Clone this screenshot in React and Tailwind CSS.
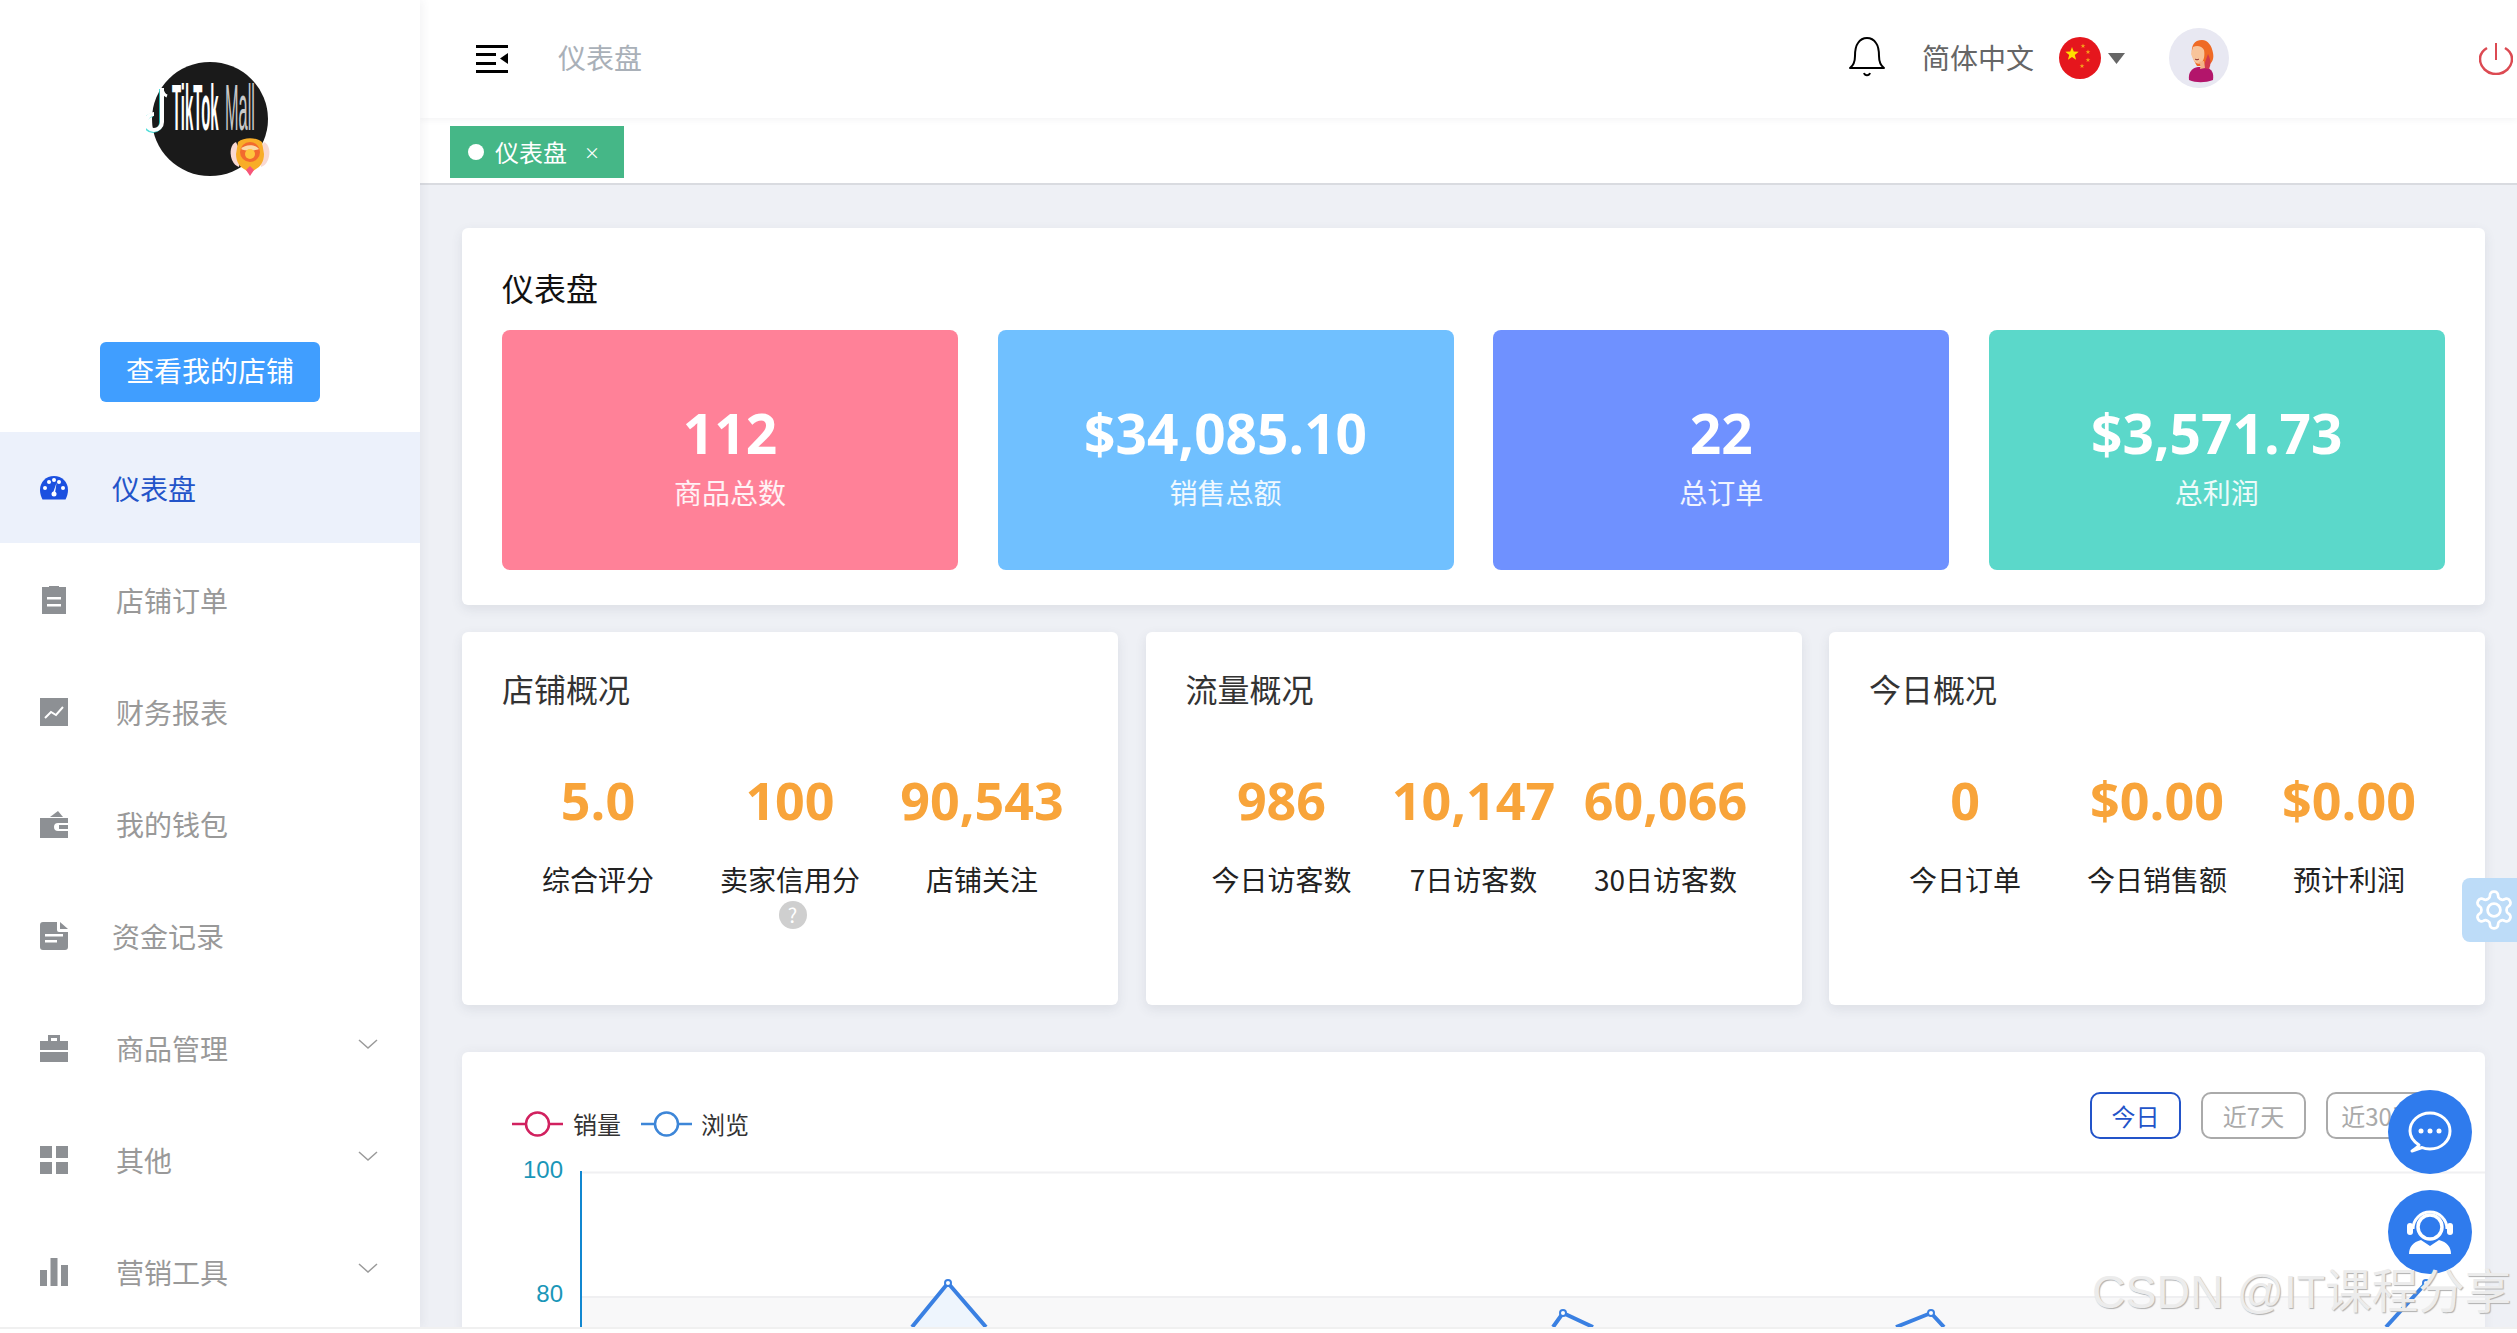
import React from "react";

const menu = [
  { label: "店铺订单", icon: "clipboard" },
  { label: "财务报表", icon: "chart" },
  { label: "我的钱包", icon: "wallet" },
  { label: "资金记录", icon: "file", shift: true },
  { label: "商品管理", icon: "briefcase", arrow: true },
  { label: "其他", icon: "grid", arrow: true },
  { label: "营销工具", icon: "bars", arrow: true },
];

function MenuIcon({ name, color = "#8d9094" }) {
  const c = { width: 28, height: 28, viewBox: "0 0 28 28", fill: color };
  if (name === "gauge")
    return (
      <svg {...c}>
        <path d="M14 2C6 2 0 8 0 16c0 3.500 1 6.500 2.500 9.500h23C27 22.500 28 19.500 28 16 28 8 22 2 14 2z" />
        <circle cx="5" cy="14" r="2" fill="#fff" />
        <circle cx="9" cy="8" r="2" fill="#fff" />
        <circle cx="14" cy="6" r="2" fill="#fff" />
        <circle cx="23" cy="14" r="2" fill="#fff" />
        <circle cx="19" cy="8" r="2" fill="#fff" />
        <path d="M16.500 9l-1.500 10h-2z" fill="#fff" />
        <circle cx="14" cy="20" r="2.500" fill="#fff" />
      </svg>
    );
  if (name === "clipboard")
    return (
      <svg {...c}>
        <path d="M2 2h7V0h10v2h7v28H2z" transform="translate(0 -1)" />
        <rect x="7" y="11" width="14" height="2.500" fill="#fff" />
        <rect x="7" y="18" width="14" height="2.500" fill="#fff" />
      </svg>
    );
  if (name === "chart")
    return (
      <svg {...c}>
        <rect x="0" y="0" width="28" height="28" />
        <path d="M5 20l6-6 5 3 7-8" fill="none" stroke="#fff" strokeWidth="2" />
      </svg>
    );
  if (name === "wallet")
    return (
      <svg {...c}>
        <path d="M10 7l8-6 5 6z" />
        <path d="M0 8h28v5H18a4 4 0 000 8h10v7H0z" />
        <rect x="19" y="15" width="9" height="4" />
      </svg>
    );
  if (name === "file")
    return (
      <svg {...c}>
        <path d="M3 0h14v8a2 2 0 002 2h9v15a3 3 0 01-3 3H3a3 3 0 01-3-3V3a3 3 0 013-3z" />
        <path d="M20 0l8 7h-8z" />
        <rect x="5" y="12" width="18" height="2.500" fill="#fff" />
        <rect x="5" y="18" width="12" height="2.500" fill="#fff" />
      </svg>
    );
  if (name === "briefcase")
    return (
      <svg {...c}>
        <path d="M8 7V1h12v6h-3V4h-6v3z" />
        <rect x="0" y="7" width="28" height="9" />
        <rect x="0" y="18" width="28" height="10" />
      </svg>
    );
  if (name === "grid")
    return (
      <svg {...c}>
        <rect x="0" y="0" width="12" height="12" />
        <rect x="16" y="0" width="12" height="12" />
        <rect x="0" y="16" width="12" height="12" />
        <rect x="16" y="16" width="12" height="12" />
      </svg>
    );
  return (
    <svg {...c}>
      <rect x="0" y="12" width="7" height="16" />
      <rect x="10.500" y="0" width="7" height="28" />
      <rect x="21" y="7" width="7" height="21" />
    </svg>
  );
}

function Logo() {
  return (
    <svg width="130" height="120" viewBox="0 0 130 120" className="block">
      <ellipse cx="64" cy="57" rx="58" ry="57" fill="#1a1a1a" />
      <path d="M16 26v34a8 8 0 11-8-8" fill="none" stroke="#25d6d0" strokeWidth="4" opacity="0.8" transform="translate(-1 1)" />
      <path d="M16 26v34a8 8 0 11-8-8" fill="none" stroke="#fff" strokeWidth="4" />
      <path d="M16 27c1 4 2 6 5 7" fill="none" stroke="#fff" strokeWidth="3" />
      <text transform="translate(26 68) scale(0.62 2.730)" fontFamily="Liberation Sans" fontWeight="700" fontSize="24" fill="#fff">TikTok</text>
      <text transform="translate(79 68) scale(0.68 2.730)" fontFamily="Liberation Sans" fontSize="24" fill="#c9c9c9">Mall</text>
      <g>
        <path d="M90 80c-5 2-7 10-4 18 2 4 4 6 7 7l2-14z" fill="#f9d9d2" />
        <path d="M118 80c5 2 7 10 4 18-2 4-4 6-7 7l-2-14z" fill="#f9d9d2" />
        <path d="M92 80c6-5 18-5 24 0l2 12c0 8-4 13-8 15l-6 4-6-4c-4-2-8-7-8-15z" fill="#f8ad28" />
        <circle cx="104" cy="90" r="10" fill="#f26a2e" />
        <path d="M95 87c4-5 14-5 18 0-4 2-14 2-18 0z" fill="#fbd9a8" />
        <circle cx="104" cy="92" r="5" fill="#ffc53d" />
        <path d="M104 104l4 4-4 6-4-6z" fill="#f6557a" />
      </g>
    </svg>
  );
}

function Flag() {
  const star = (x, y, r, f = "#ffde00") => {
    const p = [];
    for (let i = 0; i < 10; i++) {
      const a = -Math.PI / 2 + (i * Math.PI) / 5;
      const q = i % 2 ? r * 0.42 : r;
      p.push(`${x + q * Math.cos(a)},${y + q * Math.sin(a)}`);
    }
    return <polygon points={p.join(" ")} fill={f} />;
  };
  return (
    <svg width="42" height="42" viewBox="0 0 42 42">
      <circle cx="21" cy="21" r="21" fill="#e5161d" />
      {star(13, 17, 7)}
      {star(24, 9, 2.500, "#f6a01a")}
      {star(29, 15, 2.500, "#f6a01a")}
      {star(29, 23, 2.500, "#f6a01a")}
      {star(23, 29, 2.500, "#f6a01a")}
    </svg>
  );
}

function Avatar() {
  return (
    <svg width="60" height="60" viewBox="0 0 60 60">
      <circle cx="30" cy="30" r="30" fill="#e8e8f2" />
      <path d="M20 52c-1-8 3-12 9-13l8 0c6 2 8 6 7 13-8 3-17 3-24 0z" fill="#b3156b" />
      <path d="M33 12c-8 0-11 6-10 14 1 5 3 9 5 12h11c5-4 6-8 5-13-1-7-5-13-11-13z" fill="#ef6a25" />
      <path d="M39 26c3 6 3 10 1 15l-6-1z" fill="#d23a4c" />
      <path d="M24 19c4-2 9-1 11 3 1 5 0 11-3 13-4 2-7-1-8-4l-2-5z" fill="#f8c49a" />
      <path d="M29 34c2 1 3 4 2 7l5-1-1-7z" fill="#f4b187" />
      <path d="M26 31c1 1 3 1 4 0" fill="none" stroke="#8c2a2a" strokeWidth="1" />
    </svg>
  );
}

function Chart() {
  const blue = "#3a80e2";
  return (
    <svg viewBox="462 1150 2023 177" width="2023" height="177" className="block">
      <rect x="581" y="1297" width="1904" height="30" fill="#f8f8f9" />
      <line x1="581" y1="1172.500" x2="2485" y2="1172.500" stroke="#f0f0f2" strokeWidth="2" />
      <line x1="581" y1="1297" x2="2485" y2="1297" stroke="#efeff1" strokeWidth="2" />
      <line x1="581" y1="1171" x2="581" y2="1327" stroke="#1187d0" strokeWidth="2" />
      <text x="563" y="1178" textAnchor="end" fontFamily="Liberation Sans" fontSize="24" fill="#1a96b8">100</text>
      <text x="563" y="1302" textAnchor="end" fontFamily="Liberation Sans" fontSize="24" fill="#1a96b8">80</text>
      <path d="M912 1327L948 1283L986 1327z" fill="#eef5fd" />
      <path d="M912 1327L948 1283L986 1327" fill="none" stroke={blue} strokeWidth="4" />
      <circle cx="948" cy="1283" r="3" fill="#fff" stroke={blue} strokeWidth="2" />
      <path d="M1553 1327L1563 1313L1593 1327" fill="none" stroke={blue} strokeWidth="4" />
      <circle cx="1563" cy="1313" r="3" fill="#fff" stroke={blue} strokeWidth="2" />
      <path d="M1896 1327L1931 1313L1944 1327" fill="none" stroke={blue} strokeWidth="4" />
      <circle cx="1931" cy="1313" r="3" fill="#fff" stroke={blue} strokeWidth="2" />
      <path d="M2386 1327L2426 1283" fill="none" stroke={blue} strokeWidth="4" />
      <circle cx="2426" cy="1283" r="3" fill="#fff" stroke={blue} strokeWidth="2" />
    </svg>
  );
}

function LegendMark({ color }) {
  return (
    <svg width="51" height="26" viewBox="0 0 51 26">
      <line x1="0" y1="13" x2="51" y2="13" stroke={color} strokeWidth="2.500" />
      <circle cx="25.500" cy="13" r="11.500" fill="#fff" stroke={color} strokeWidth="2.500" />
    </svg>
  );
}

function StatCard({ value, label, bg }) {
  return (
    <div className={`h-[240px] w-[456px] rounded-[8px] ${bg} flex flex-col items-center text-white pt-[68px]`}>
      <div className="text-[55px] leading-[70px] font-bold font-['Open_Sans',sans-serif]">{value}</div>
      <div className="text-[28px] leading-[40px] mt-[4px] text-white/90">{label}</div>
    </div>
  );
}

function Metric({ value, label, help }) {
  return (
    <div className="w-[192px] flex flex-col items-center">
      <div className="h-[64px] text-[52px] leading-[64px] font-bold text-[#f8a43a] font-['Open_Sans',sans-serif] whitespace-nowrap">{value}</div>
      <div className="mt-[27px] text-[28px] leading-[40px] text-[#222] whitespace-nowrap">{label}</div>
      {help && (
        <div className="mt-[2px] ml-[5px] w-[28px] h-[28px] rounded-full bg-[#cfcfcf] text-white text-[20px] leading-[28px] text-center">?</div>
      )}
    </div>
  );
}

function Overview({ title, items }) {
  return (
    <div className="h-[373px] w-[656px] bg-white rounded-[6px] shadow-[0_4px_12px_rgba(60,70,90,0.10)] pl-[40px] pt-[34px]">
      <div className="text-[32px] leading-[44px] text-[#333]">{title}</div>
      <div className="mt-[58px] flex">
        {items.map((it) => (
          <Metric key={it.label} {...it} />
        ))}
      </div>
    </div>
  );
}

export default function App() {
  return (
    <div className="w-[2517px] h-[1333px] overflow-hidden bg-white font-['Noto_Sans_CJK_SC','Noto_Sans',sans-serif] relative">
      <div className="flex h-[1327px] overflow-hidden">
        {/* sidebar */}
        <aside className="w-[420px] shrink-0 bg-white relative z-10 shadow-[3px_0_8px_rgba(60,70,90,0.06)]">
          <div className="h-[342px] pt-[62px] pl-[146px]">
            <Logo />
          </div>
          <div className="h-[90px] flex justify-center">
            <div className="w-[220px] h-[60px] rounded-[6px] bg-[#409eff] text-white text-[28px] leading-[57px] text-center">查看我的店铺</div>
          </div>
          <div className="h-[111px] bg-[#ecf1fb] flex items-center pl-[40px] text-[#2354c9] text-[28px]">
            <MenuIcon name="gauge" color="#1b50e0" />
            <span className="ml-[44px]">仪表盘</span>
          </div>
          {menu.map((m) => (
            <div key={m.label} className="h-[112px] pt-[2px] flex items-center pl-[40px] text-[#999] text-[28px] relative">
              <MenuIcon name={m.icon} />
              <span className={m.shift ? "ml-[44px]" : "ml-[48px]"}>{m.label}</span>
              {m.arrow && (
                <svg width="20" height="12" viewBox="0 0 20 12" className="ml-auto mr-[42px] -mt-[8px]">
                  <path d="M1 2l9 8 9-8" fill="none" stroke="#9a9a9a" strokeWidth="1.500" />
                </svg>
              )}
            </div>
          ))}
        </aside>

        {/* right */}
        <div className="flex-1 min-w-0 flex flex-col bg-[#eef0f5]">
          <header className="h-[118px] shrink-0 bg-white shadow-[0_2px_6px_rgba(60,70,90,0.06)] relative flex items-center">
            <svg width="32" height="28" viewBox="0 0 32 28" className="ml-[56px]">
              <rect x="0" y="0" width="32" height="3" fill="#000" />
              <rect x="0" y="8" width="20" height="3" fill="#000" />
              <rect x="0" y="17" width="20" height="3" fill="#000" />
              <rect x="0" y="25" width="32" height="3" fill="#000" />
              <path d="M32 8v11l-8-5.500z" fill="#000" />
            </svg>
            <span className="ml-[50px] -mt-[5px] text-[28px] text-[#a9b0b8]">仪表盘</span>
            <div className="ml-auto flex items-center -mt-[2px]">
              <svg width="36" height="40" viewBox="0 0 36 40" className="mr-[37px] ml-[2px] -mt-[3px]">
                <path d="M1 31c4-3 5-7 5-12 0-5 0-9 3-13 2-3 5-5 9-5s7 2 9 5c3 4 3 8 3 13 0 5 1 9 5 12z" fill="none" stroke="#000" strokeWidth="2" strokeLinejoin="round" />
                <path d="M15 36c1 3 5 3 6 0" fill="none" stroke="#000" strokeWidth="2" />
              </svg>
              <span className="text-[28px] text-[#666] mr-[25px] -mt-[2px]">简体中文</span>
              <Flag />
              <svg width="17" height="11" viewBox="0 0 17 11" className="ml-[7px] mr-[44px]">
                <path d="M0 0h17l-8.500 11z" fill="#666" />
              </svg>
              <Avatar />
              <svg width="34" height="32" viewBox="0 0 34 32" className="ml-[250px] mr-[4px] mt-[2px]">
                <path d="M8 5C3 8 1 12 1 16c0 8 7 15 16 15s16-7 16-15c0-4-2-8-7-11" fill="none" stroke="#dc4a52" strokeWidth="2.500" />
                <line x1="17" y1="0" x2="17" y2="17" stroke="#dc4a52" strokeWidth="2" />
              </svg>
            </div>
          </header>

          <div className="h-[67px] shrink-0 bg-white border-b-2 border-[#d9dbe0] pl-[30px] pt-[8px]">
            <div className="w-[174px] h-[52px] bg-[#45b787] text-white flex items-center pl-[18px] text-[24px]">
              <span className="w-[16px] h-[16px] rounded-full bg-white" />
              <span className="ml-[11px]">仪表盘</span>
              <span className="ml-[17px] text-[16px]">×</span>
            </div>
          </div>

          <main className="flex-1 min-h-0 pl-[42px] pr-[32px] pt-[43px]">
            <section className="h-[377px] w-[2023px] bg-white rounded-[6px] shadow-[0_4px_12px_rgba(60,70,90,0.10)] px-[40px] pt-[37px]">
              <div className="text-[32px] leading-[44px] text-[#111]">仪表盘</div>
              <div className="mt-[21px] flex gap-[39.6px]">
                <StatCard value="112" label="商品总数" bg="bg-[#ff8198]" />
                <StatCard value="$34,085.10" label="销售总额" bg="bg-[#70c0ff]" />
                <StatCard value="22" label="总订单" bg="bg-[#6f91ff]" />
                <StatCard value="$3,571.73" label="总利润" bg="bg-[#5bd8ca]" />
              </div>
            </section>

            <div className="mt-[27px] flex justify-between w-[2023px]">
              <Overview
                title="店铺概况"
                items={[
                  { value: "5.0", label: "综合评分" },
                  { value: "100", label: "卖家信用分", help: true },
                  { value: "90,543", label: "店铺关注" },
                ]}
              />
              <Overview
                title="流量概况"
                items={[
                  { value: "986", label: "今日访客数" },
                  { value: "10,147", label: "7日访客数" },
                  { value: "60,066", label: "30日访客数" },
                ]}
              />
              <Overview
                title="今日概况"
                items={[
                  { value: "0", label: "今日订单" },
                  { value: "$0.00", label: "今日销售额" },
                  { value: "$0.00", label: "预计利润" },
                ]}
              />
            </div>

            <section className="mt-[47px] w-[2023px] h-[400px] bg-white rounded-t-[6px] shadow-[0_0_12px_rgba(60,70,90,0.06)]">
              <div className="h-[98px] pt-[40px] pl-[50px] pr-[54px] flex justify-between items-start">
                <div className="flex items-center h-[64px] text-[24px] text-[#333]">
                  <LegendMark color="#d1215f" />
                  <span className="ml-[10px]">销量</span>
                  <span className="ml-[20px]" />
                  <LegendMark color="#3d86d8" />
                  <span className="ml-[9px]">浏览</span>
                </div>
                <div className="flex gap-[20px] text-[24px]">
                  <div className="w-[91px] h-[47px] rounded-[10px] border-2 border-[#2354c9] text-[#2354c9] leading-[43px] text-center">今日</div>
                  <div className="w-[105px] h-[47px] rounded-[10px] border-2 border-[#aaa] text-[#aaa] leading-[43px] text-center">近7天</div>
                  <div className="w-[105px] h-[47px] rounded-[10px] border-2 border-[#aaa] text-[#aaa] leading-[43px] text-center">近30天</div>
                </div>
              </div>
              <Chart />
            </section>
          </main>
        </div>
      </div>
      <div className="h-[6px] bg-white border-t-2 border-[#f0f0f0]" />

      {/* floating */}
      <div className="absolute left-[2462px] top-[878px] w-[55px] h-[64px] rounded-l-[8px] bg-[#bddcf8] flex items-center pl-[10px]">
        <svg width="44" height="44" viewBox="0 0 24 24" fill="none" stroke="#fff" strokeWidth="1.500" strokeLinejoin="round">
          <path d="M12.220 2h-.440a2 2 0 0 0-2 2v.180a2 2 0 0 1-1 1.730l-.430.250a2 2 0 0 1-2 0l-.150-.080a2 2 0 0 0-2.730.730l-.220.380a2 2 0 0 0 .730 2.730l.150.100a2 2 0 0 1 1 1.720v.510a2 2 0 0 1-1 1.740l-.150.090a2 2 0 0 0-.730 2.730l.220.380a2 2 0 0 0 2.730.730l.150-.080a2 2 0 0 1 2 0l.430.250a2 2 0 0 1 1 1.730V20a2 2 0 0 0 2 2h.440a2 2 0 0 0 2-2v-.180a2 2 0 0 1 1-1.730l.430-.250a2 2 0 0 1 2 0l.150.080a2 2 0 0 0 2.730-.730l.220-.390a2 2 0 0 0-.730-2.730l-.150-.080a2 2 0 0 1-1-1.740v-.500a2 2 0 0 1 1-1.740l.150-.090a2 2 0 0 0 .730-2.730l-.220-.380a2 2 0 0 0-2.730-.730l-.150.080a2 2 0 0 1-2 0l-.430-.250a2 2 0 0 1-1-1.730V4a2 2 0 0 0-2-2z" />
          <circle cx="12" cy="12" r="3.500" />
        </svg>
      </div>

      <div className="absolute left-[2388px] top-[1090px] w-[84px] h-[84px] rounded-full bg-[#2f7bed] flex items-center justify-center">
        <svg width="46" height="44" viewBox="0 0 46 44">
          <path d="M12 35C6 31 3 26 3 21 3 11 12 3 23 3s20 8 20 18-9 18-20 18c-3 0-6-.500-8-1.500L5 41c3-2 6-4 7-6z" fill="none" stroke="#fff" strokeWidth="3" strokeLinejoin="round" />
          <circle cx="14" cy="21" r="2.500" fill="#fff" />
          <circle cx="23" cy="21" r="2.500" fill="#fff" />
          <circle cx="32" cy="21" r="2.500" fill="#fff" />
        </svg>
      </div>
      <div className="absolute left-[2388px] top-[1190px] w-[84px] h-[84px] rounded-full bg-[#2f7bed] flex items-center justify-center">
        <svg width="50" height="48" viewBox="0 0 50 48">
          <path d="M8 21a17 17 0 0134 0" fill="none" stroke="#fff" strokeWidth="3" />
          <circle cx="25" cy="19" r="12" fill="#2f7bed" stroke="#fff" strokeWidth="3.500" />
          <rect x="2" y="15" width="6" height="12" rx="3" fill="#fff" />
          <rect x="42" y="15" width="6" height="12" rx="3" fill="#fff" />
          <path d="M4 46c0-7 4-12 12-14l9 6 9-6c8 2 12 7 12 14z" fill="#fff" />
        </svg>
      </div>

      <div className="absolute left-[2092px] top-[1264px] text-[46.500px] leading-[56px] whitespace-nowrap text-[#ececec] font-['Liberation_Sans','Noto_Sans_CJK_SC',sans-serif] [text-shadow:1px_1px_1px_#b0b0b0]">CSDN @IT课程分享</div>
    </div>
  );
}
